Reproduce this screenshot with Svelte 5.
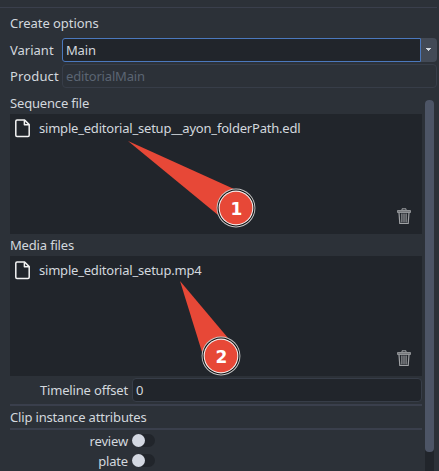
<script>
  const files = [
    { label: 'Sequence file', name: 'simple_editorial_setup__ayon_folderPath.edl' },
    { label: 'Media files', name: 'simple_editorial_setup.mp4' }
  ];
  const toggles = ['review', 'plate'];
  const callouts = [
    { n: 1, x: 236, y: 208, points: '128,141 234,189 218,215' },
    { n: 2, x: 221, y: 356, points: '180,281 228,338 202,352' }
  ];
</script>

<main class="window">
  <hr class="top-rule" />
  <h2 class="heading">Create options</h2>
  <div class="row">
    <span class="name">Variant</span>
    <div class="combo">
      <div class="combo-value">Main</div>
      <div class="combo-arrow">
        <svg width="5" height="3" shape-rendering="crispEdges"><path d="M0 0H5V1H4V2H3V3H2V2H1V1H0Z" fill="#d3d8de" /></svg>
      </div>
    </div>
  </div>
  <div class="row product">
    <span class="name">Product</span>
    <div class="field disabled">editorialMain</div>
  </div>

  <div class="scroll-area">
    <div class="content">
      {#each files as file}
        <div class="label">{file.label}</div>
        <div class="panel">
          <div class="file">
            <svg class="doc" width="16" height="19" viewBox="0 0 16 19" fill="none" stroke="#f4f4f4" stroke-width="1.5" stroke-linejoin="round">
              <path d="M2 1H9.6L14.2 5.6V16.2Q14.2 17.4 13 17.4H2Q.8 17.4 .8 16.2V2.2Q.8 1 2 1Z" />
              <path d="M9.4 1.2V5.8H14" />
            </svg>
            <span>{file.name}</span>
          </div>
          <svg class="trash" width="14" height="17" viewBox="0 0 14 17" fill="none" stroke="#a0a2a5">
            <path d="M5 2V.8H9V2" />
            <path d="M.5 2.5H13.5V4.5H.5Z" fill="#77797d" stroke-width=".8" />
            <path d="M2 4.5L2.8 15.5H11.2L12 4.5" stroke-width="1.2" />
            <path d="M4.9 5.5V14.5M7 5.5V14.5M9.1 5.5V14.5" stroke-width="1.1" />
          </svg>
        </div>
      {/each}
      <div class="offset-row">
        <span class="attr-name">Timeline offset</span>
        <div class="field">0</div>
      </div>
      <hr class="rule" />
      <div class="section">Clip instance attributes</div>
      <hr class="rule" />
      <div class="toggles">
        {#each toggles as t}
          <div class="toggle-row">
            <span class="attr-name">{t}</span>
            <span class="switch"><i></i></span>
          </div>
        {/each}
      </div>
    </div>
    <div class="scrollbar"><div class="thumb"></div></div>
  </div>

  <svg class="callouts" width="439" height="471">
    {#each callouts as c}
      <polygon points={c.points} fill="#e74837" />
      <circle cx={c.x} cy={c.y} r="19.4" fill="#c9c9c9" />
      <circle cx={c.x} cy={c.y} r="18.5" fill="#0c0c0c" />
      <circle cx={c.x} cy={c.y} r="17.4" fill="#f4eeee" />
      <circle cx={c.x} cy={c.y} r="16.3" fill="#e74837" />
      <text x={c.x + 0.5} y={c.y + 7}>{c.n}</text>
    {/each}
  </svg>
</main>

<style>
  :global(body) { margin: 0; background: #2c3138; }
  .window {
    position: relative;
    box-sizing: border-box;
    width: 439px;
    height: 471px;
    overflow: hidden;
    padding-top: 7px;
    display: flex;
    flex-direction: column;
    background: #2c3138;
    color: #d3d8de;
    font: 13px/18px "Noto Sans", sans-serif;
    letter-spacing: -0.17px;
  }
  hr { border: 0; margin: 0; flex: none; background: #3a3f4c; }
  .top-rule { height: 1px; width: 437px; }
  .heading { margin: 6px 0 6px 10px; font: inherit; letter-spacing: -0.05px; }
  .row { display: flex; height: 24px; flex: none; padding: 0 2px 0 10px; align-items: stretch; line-height: 24px; }
  .name { width: 52px; flex: none; letter-spacing: 0; }
  .product { margin-top: 2px; }
  .product .name { letter-spacing: 0.15px; }
  .combo { flex: 1; display: flex; }
  .combo-value {
    flex: 1;
    box-sizing: border-box;
    padding-left: 3px;
    line-height: 22px;
    background: #21252b;
    border: 1px solid #4b78bd;
    border-radius: 3px 0 0 3px;
  }
  .combo-arrow {
    width: 16px;
    box-sizing: border-box;
    display: flex;
    align-items: center;
    justify-content: center;
    padding: 0 1px 1px 0;
    background: #434a56;
    border-radius: 0 4px 4px 0;
  }
  .combo-arrow svg { display: block; }
  .field {
    flex: 1;
    box-sizing: border-box;
    height: 24px;
    padding-left: 3px;
    line-height: 22px;
    border: 1px solid #373d48;
    border-radius: 4px;
    background: #21252b;
  }
  .disabled { background: transparent; color: #5b6573; }
  .scroll-area { flex: 1; min-height: 0; display: flex; padding: 7px 5px 0 10px; gap: 3px; }
  .content { width: 412px; flex: none; }
  .label { height: 19px; line-height: 17px; }
  .label:not(:first-child) { height: 22px; line-height: 22px; }
  .panel {
    height: 120px;
    box-sizing: border-box;
    padding: 5px 11px 9px 5px;
    display: flex;
    flex-direction: column;
    justify-content: space-between;
    background: #21252b;
  }
  .file { display: flex; gap: 8px; line-height: 19px; letter-spacing: -0.21px; }
  .doc { display: block; flex: none; }
  .trash { display: block; align-self: flex-end; }
  .offset-row { display: flex; margin: 2px 0; line-height: 24px; }
  .attr-name { width: 118px; margin-right: 4px; flex: none; text-align: right; }
  .rule { height: 2px; }
  .section { height: 22px; line-height: 22px; }
  .toggles { padding-top: 2px; }
  .toggle-row { display: flex; height: 20px; line-height: 19px; }
  .switch { width: 23px; height: 13px; margin-top: 2px; border-radius: 7px; background: #21252b; }
  .switch i { display: block; width: 13px; height: 13px; border-radius: 50%; background: #d3d8e2; }
  .scrollbar { width: 9px; flex: none; margin-top: 5px; background: #21252b; border-radius: 4px 4px 0 0; }
  .thumb { height: 352px; border-radius: 4px; background: #4d5566; }
  .callouts { position: absolute; left: 0; top: 0; }
  .callouts text { fill: #fff; font: bold 17px "DejaVu Sans", sans-serif; letter-spacing: 0; text-anchor: middle; }
</style>
